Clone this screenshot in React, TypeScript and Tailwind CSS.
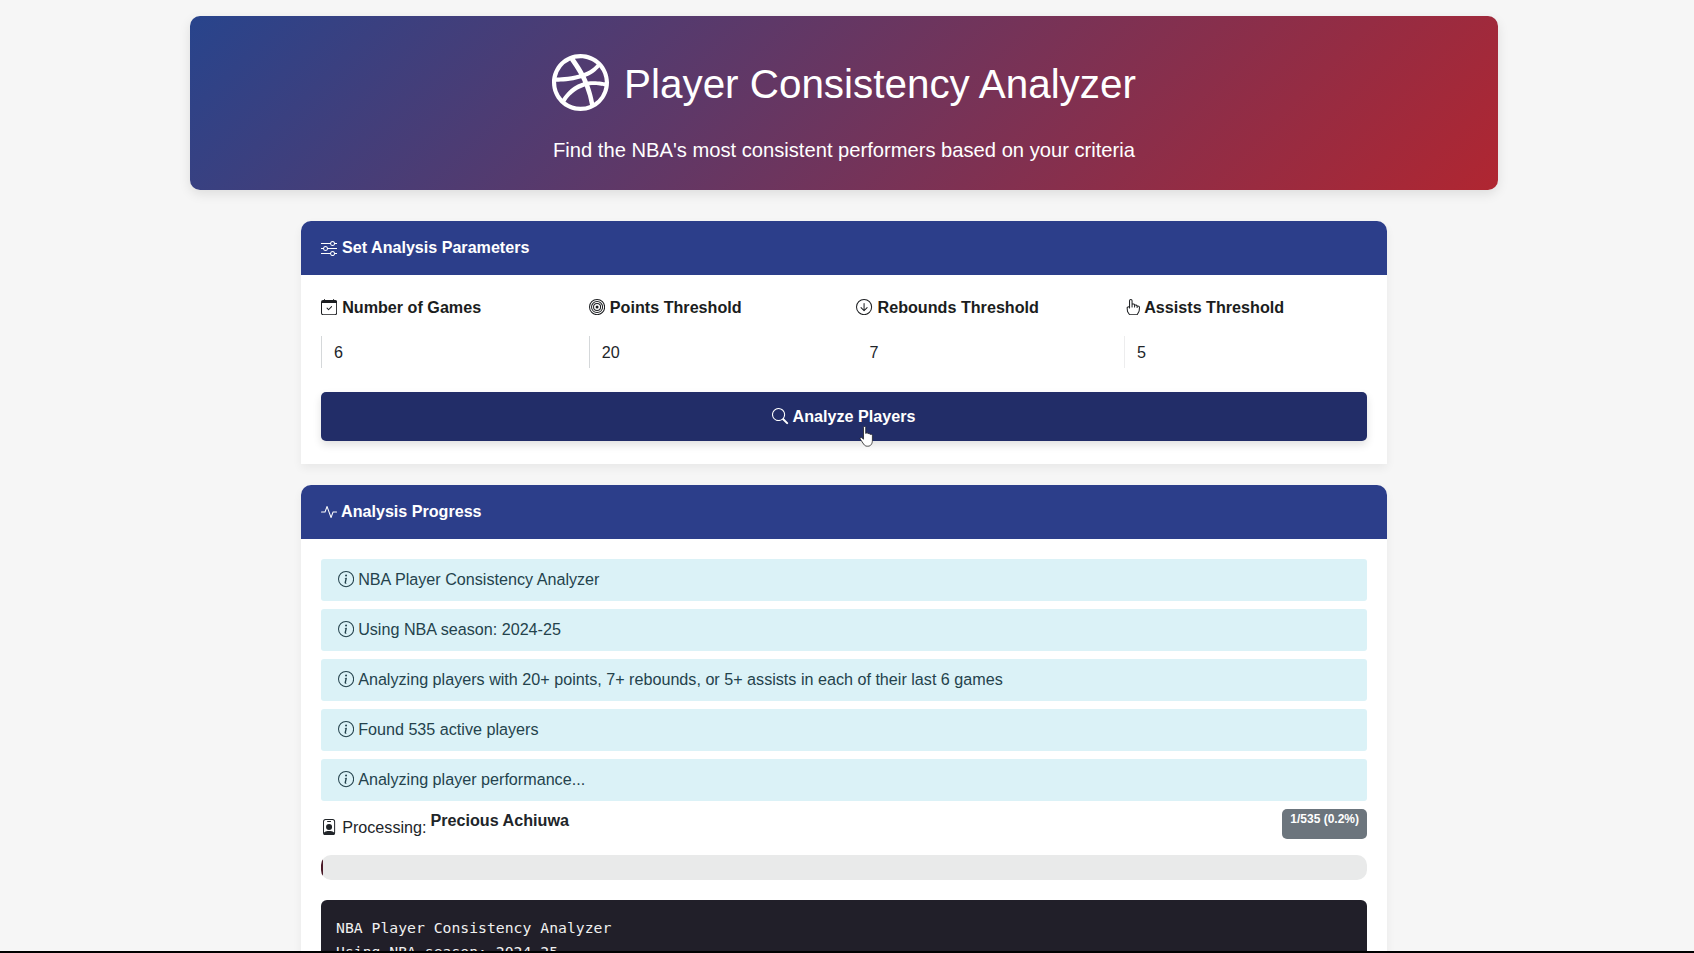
import type { ReactNode } from "react";
import {
  BsActivity,
  BsArrowDownCircle,
  BsBullseye,
  BsCalendarCheck,
  BsDribbble,
  BsHandIndex,
  BsInfoCircle,
  BsPersonBadge,
  BsSearch,
  BsSliders,
} from "react-icons/bs";

const messages = [
  "NBA Player Consistency Analyzer",
  "Using NBA season: 2024-25",
  "Analyzing players with 20+ points, 7+ rebounds, or 5+ assists in each of their last 6 games",
  "Found 535 active players",
  "Analyzing player performance...",
];

const fields = [
  { icon: <BsCalendarCheck />, label: "Number of Games", value: "6", edge: "border-[#d5d8da]" },
  { icon: <BsBullseye />, label: "Points Threshold", value: "20", edge: "border-[#d5d8da]" },
  { icon: <BsArrowDownCircle />, label: "Rebounds Threshold", value: "7", edge: "border-transparent" },
  { icon: <BsHandIndex className="-mr-px" />, label: "Assists Threshold", value: "5", edge: "border-[#ededee]" },
];

function Card({ icon, title, className, children }: { icon: ReactNode; title: string; className: string; children: ReactNode }) {
  return (
    <section className={`w-[1086px] rounded-t-[10px] bg-white shadow-[0_4px_10px_rgba(0,0,0,0.06)] ${className}`}>
      <h2 className="flex h-[54px] items-center gap-[5px] rounded-t-[10px] bg-[#2c3e8a] px-5 text-[16.1px] font-bold text-white">
        {icon}
        <span className="pb-[2px]">{title}</span>
      </h2>
      <div className="px-5">{children}</div>
    </section>
  );
}

export default function App() {
  return (
    <div className="relative h-[953px] w-full overflow-hidden bg-[#f6f6f6] font-['Liberation_Sans',Arial,sans-serif] text-[16.15px] leading-6 text-[#212529]">
      <div className="flex w-[1688px] flex-col items-center pt-4">
        <header className="flex h-[174px] w-[1308px] flex-col items-center rounded-[10px] bg-[linear-gradient(135deg,#28448c_0%,#b02631_100%)] pt-[37px] text-white shadow-[0_4px_12px_rgba(0,0,0,0.1)]">
          <h1 className="flex h-[60px] items-center gap-[15px] text-[40.4px] leading-[60px]">
            <BsDribbble className="-mt-[2px] size-[57px]" />
            <span className="pt-[2px]">Player Consistency Analyzer</span>
          </h1>
          <p className="mt-[23px] text-[20.17px] leading-[28px]">Find the NBA's most consistent performers based on your criteria</p>
        </header>

        <Card icon={<BsSliders />} title="Set Analysis Parameters" className="mt-[31px] h-[243px]">
          <div className="flex">
            {fields.map((f) => (
              <div key={f.label} className="w-[267.7px] shrink-0">
                <label className="mt-5 flex h-6 items-center gap-[5px] font-bold text-[#1b1d20]">
                  {f.icon}
                  {f.label}
                </label>
                <div className={`mt-[17px] flex h-8 items-center border-l pl-3 ${f.edge}`}>{f.value}</div>
              </div>
            ))}
          </div>
          <button className="mt-6 flex h-[49px] w-full items-center justify-center gap-1 rounded-[5px] bg-[#222d68] font-bold text-white shadow-[0_4px_8px_rgba(0,0,0,0.12)]">
            <BsSearch />
            <span className="pb-[2px]">Analyze Players</span>
          </button>
        </Card>

        <Card icon={<BsActivity className="-mr-px" />} title="Analysis Progress" className="mt-[21px] h-[500px]">
          <div className="flex flex-col gap-2 pt-5">
            {messages.map((m) => (
              <div key={m} className="flex h-[42px] items-center gap-1 rounded-[3px] bg-[#dbf2f7] px-[17px] pb-px text-[#24424c]">
                <BsInfoCircle />
                <span className="pb-px">{m}</span>
              </div>
            ))}
          </div>
          <div className="mt-2 flex h-[31px] justify-between">
            <div className="flex">
              <BsPersonBadge className="mt-[10px]" />
              <span className="mt-[6px] ml-[5px]">Processing:</span>
              <strong className="-mt-px ml-1">Precious Achiuwa</strong>
            </div>
            <span className="h-[30px] rounded-[5px] bg-[#6c757d] px-2 pt-[3px] text-[12px] leading-[14px] font-bold text-white">1/535 (0.2%)</span>
          </div>
          <div className="mt-[15px] h-[25px] overflow-hidden rounded-[10px] bg-[#e9eaea]">
            <div className="h-full w-[2px] bg-[#4a1a28]" />
          </div>
          <pre className="mt-5 h-[120px] rounded-[6px] bg-[#211f29] px-[15px] pt-4 font-['DejaVu_Sans_Mono',monospace] text-[14.75px] leading-6 text-[#f0f0f0]">
            {"NBA Player Consistency Analyzer\nUsing NBA season: 2024-25"}
          </pre>
        </Card>
      </div>
      <svg className="absolute top-[426px] left-[859px] h-[21px] w-[15px]" viewBox="0 0 15 21">
        <path
          d="M4.5 1.4c0-1.2 2.2-1.2 2.2 0v6l1-.5c.7-.2 1.3.2 1.4.8.8-.5 1.8-.1 2 .7 1-.4 2.2.1 2.3 1.1v4.7c0 3.4-1.5 6-4.5 6H8.2c-1.6 0-2.7-.8-3.5-2L1.2 13c-.6-1.1.6-2 1.6-1.3l1.7 1.5z"
          fill="#fff"
          stroke="#222"
          strokeWidth=".8"
        />
      </svg>
      <div className="absolute inset-x-0 bottom-0 h-[2px] bg-black" />
    </div>
  );
}
